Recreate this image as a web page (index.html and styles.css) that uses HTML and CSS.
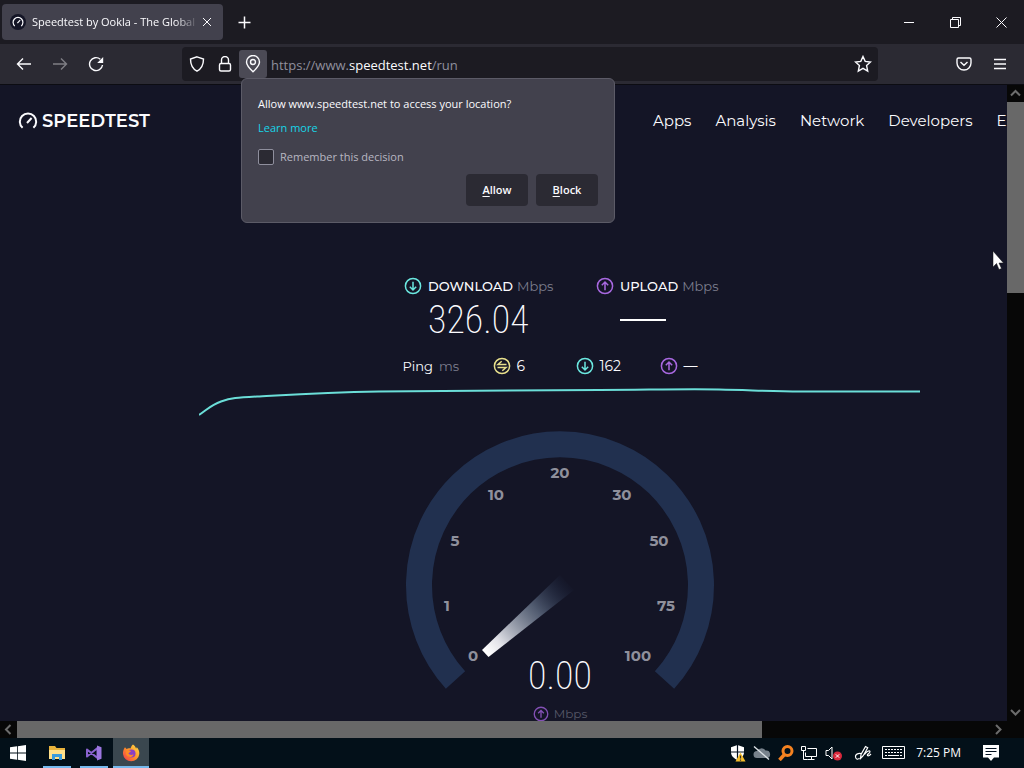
FILE: index.html
```html
<!DOCTYPE html>
<html lang="en">
<head>
<meta charset="utf-8">
<title>Speedtest by Ookla - The Global Broadband Speed Test</title>
<link rel="stylesheet" href="styles.css">
</head>
<body>
<svg class="defs" aria-hidden="true">
  <symbol id="dial" viewBox="0 0 20 20"><path d="M4.600 16.800A8.200 8.200 0 1 1 15.400 16.800M9 12l4.600-5" fill="none" stroke="currentColor" stroke-width="2"/></symbol>
  <symbol id="down" viewBox="0 0 18 18"><circle cx="9" cy="9" r="7.600"/><path d="M9 4.800v8M5.800 9.800 9 13l3.200-3.200"/></symbol>
  <symbol id="up" viewBox="0 0 18 18"><circle cx="9" cy="9" r="7.600"/><path d="M9 13.200v-8M5.800 8.200 9 5l3.200 3.200"/></symbol>
  <symbol id="swap" viewBox="0 0 18 18"><circle cx="9" cy="9" r="7.600"/><path d="M13.500 7.400H5L8.700 4.200M4.500 10.600H13L9.300 13.800"/></symbol>
</svg>
<div class="window">
  <header class="tabbar">
    <div class="tab">
      <span class="favicon"><svg width="12" height="12"><use href="#dial"/></svg></span>
      <span class="tab-title">Speedtest by Ookla - The Global</span>
      <button class="tab-close" aria-label="Close tab"><svg width="10" height="10" viewBox="0 0 10 10"><path d="M1 1l8 8M9 1l-8 8"/></svg></button>
    </div>
    <button class="new-tab" aria-label="New tab"><svg width="13" height="13" viewBox="0 0 13 13"><path d="M6.500 .5v12M.5 6.500h12"/></svg></button>
    <div class="window-controls">
      <button aria-label="Minimize"><svg width="11" height="11" viewBox="0 0 11 11"><path d="M0 5.500h10"/></svg></button>
      <button aria-label="Restore"><svg width="11" height="11" viewBox="0 0 11 11"><path d="M.5 2.500h8v8h-8zM2.500 2.500v-2h8v8h-2"/></svg></button>
      <button aria-label="Close"><svg width="11" height="11" viewBox="0 0 11 11"><path d="M.5.5l10 10M10.500.5l-10 10"/></svg></button>
    </div>
  </header>

  <div class="toolbar">
    <button class="tool" aria-label="Back"><svg width="16" height="16" viewBox="0 0 16 16"><path d="M15 8H1.500M7 2.500 1.500 8 7 13.500"/></svg></button>
    <button class="tool" aria-label="Forward" disabled><svg width="16" height="16" viewBox="0 0 16 16"><path d="M1 8h13.500M9 2.500 14.500 8 9 13.500"/></svg></button>
    <button class="tool" aria-label="Reload"><svg width="16" height="16" viewBox="0 0 16 16"><path d="M14.500 9A6.500 6.500 0 1 1 12.300 3.200"/><path d="M15.200 1v6H9.200z" class="solid"/></svg></button>
    <div class="urlbar">
      <button class="url-icon" aria-label="Tracking protection"><svg width="16" height="16" viewBox="0 0 16 16"><path d="M8 .8 14.500 3c0 6-1.500 9.500-6.500 12.200C3 12.500 1.500 9 1.500 3z"/></svg></button>
      <button class="url-icon" aria-label="Connection secure"><svg width="16" height="16" viewBox="0 0 16 16"><path d="M4.500 7.500V4a3.500 3.500 0 0 1 7 0v3.500"/><rect x="2.500" y="7.500" width="11" height="7.500" rx="1.500"/></svg></button>
      <div class="permission">
        <button class="url-icon active" aria-label="Location permission"><svg width="16" height="18" viewBox="0 0 16 18"><path d="M8 16.800C4.500 13.500 1.500 10.500 1.500 7a6.500 6.500 0 0 1 13 0c0 3.500-3 6.500-6.500 9.800z"/><circle cx="8" cy="7" r="2.500"/></svg></button>
        <section class="popup" role="dialog" aria-label="Location request">
          <h2>Allow www.speedtest.net to access your location?</h2>
          <a href="#learn">Learn more</a>
          <label class="remember" for="remember"><input type="checkbox" id="remember">Remember this decision</label>
          <div class="popup-actions">
            <button><span><u>A</u>llow</span></button>
            <button><span><u>B</u>lock</span></button>
          </div>
        </section>
      </div>
      <div class="address">https://www.<b>speedtest.net</b>/run</div>
      <button class="url-icon" aria-label="Bookmark this page"><svg width="18" height="18" viewBox="0 0 18 18"><path d="M9 1.500l2.200 4.900 5.300.6-3.900 3.600 1.100 5.400L9 13.300 4.300 16l1.100-5.400L1.500 7l5.300-.6z"/></svg></button>
    </div>
    <button class="tool" aria-label="Save to Pocket"><svg width="16" height="16" viewBox="0 0 16 16"><path d="M2.500 2h11a1.500 1.500 0 0 1 1.500 1.500V7A7 7 0 0 1 1 7V3.500A1.500 1.500 0 0 1 2.500 2zM4.500 6 8 9.300 11.500 6"/></svg></button>
    <button class="tool" aria-label="Menu"><svg width="14" height="16" viewBox="0 0 14 16"><path d="M1 3.500h12M1 8h12M1 12.500h12"/></svg></button>
  </div>

  <div class="content">
    <div class="viewport">
      <div class="page">
        <header class="site-header">
          <a class="logo" href="#home"><svg width="20" height="20"><use href="#dial"/></svg>SPEEDTEST</a>
          <nav class="site-nav">
            <a href="#apps">Apps</a>
            <a href="#analysis">Analysis</a>
            <a href="#network">Network</a>
            <a href="#developers">Developers</a>
            <a href="#enterprise">Enterprise</a>
          </nav>
        </header>
        <main>
          <div class="results">
            <section class="result">
              <h3><svg class="ico download"><use href="#down"/></svg>DOWNLOAD <span>Mbps</span></h3>
              <p class="value">326.04</p>
            </section>
            <section class="result">
              <h3><svg class="ico upload"><use href="#up"/></svg>UPLOAD <span>Mbps</span></h3>
              <p class="value"><span class="dash"></span></p>
            </section>
          </div>
          <div class="pings">
            <span class="ping-label">Ping <span>ms</span></span>
            <span><svg class="ico idle"><use href="#swap"/></svg>6</span>
            <span><svg class="ico download"><use href="#down"/></svg>162</span>
            <span><svg class="ico upload"><use href="#up"/></svg>—</span>
          </div>
          <svg class="chart" viewBox="0 0 722 32" aria-label="Download speed over time"><path d="M0 28C9 22 12 18 22 14.500S38 10.500 58 9.500S120 5.500 180 4.500S330 3.500 400 3S490 2 520 2.500S570 4.500 602 4.500H721"/></svg>
          <div class="gauge">
            <svg viewBox="0 0 310 260" aria-label="Speed gauge">
              <defs><linearGradient id="needle" gradientUnits="userSpaceOnUse" x1="82" y1="222" x2="164" y2="150"><stop offset="0" stop-color="#fff"/><stop offset=".15" stop-color="#e2e2e8"/><stop offset=".6" stop-color="#6c7a90" stop-opacity=".7"/><stop offset="1" stop-color="#26395c" stop-opacity="0"/></linearGradient></defs>
              <path class="track" d="M50.500 249A141 141 0 1 1 259.500 249"/>
              <path fill="url(#needle)" d="M77 219 83.500 226 169 159 155 144z"/>
              <g class="ticks">
                <text x="68" y="230">0</text><text x="42" y="180">1</text><text x="50" y="115">5</text>
                <text x="91" y="69">10</text><text x="155" y="47">20</text><text x="217" y="69">30</text>
                <text x="254" y="115">50</text><text x="261" y="180">75</text><text x="233" y="230">100</text>
              </g>
            </svg>
            <div class="reading">
              <p class="value">0.00</p>
              <p class="unit"><svg class="ico upload"><use href="#up"/></svg>Mbps</p>
            </div>
          </div>
        </main>
      </div>
    </div>
    <div class="vscroll">
      <svg width="17" height="17" viewBox="0 0 17 17"><path d="M4 10.500 8.500 6 13 10.500"/></svg>
      <div class="vthumb"></div>
      <svg width="17" height="17" viewBox="0 0 17 17"><path d="M4 6 8.500 10.500 13 6"/></svg>
    </div>
    <div class="hscroll">
      <svg width="17" height="17" viewBox="0 0 17 17"><path d="M10.500 4 6 8.500 10.500 13"/></svg>
      <div class="hthumb"></div>
      <svg width="17" height="17" viewBox="0 0 17 17"><path d="M6 4 10.500 8.500 6 13"/></svg>
    </div>
    <svg class="cursor" width="12" height="20" viewBox="0 0 12 20"><path d="M1 0v16l3.500-3.500L7 18.500l2.500-1L7 12h4.500z" fill="#fff" stroke="#111" stroke-width=".5"/></svg>
  </div>

  <footer class="taskbar">
    <button class="start" aria-label="Start"><svg width="16" height="16" viewBox="0 0 16 16" fill="#fff"><path d="M0 2.300 7 1.300V7.600H0zM7.800 1.200 16 0v7.600H7.800zM0 8.400h7v6.300L0 13.700zM7.800 8.400H16V16l-8.200-1.200z"/></svg></button>
    <button class="app" aria-label="File Explorer"><svg width="18" height="16" viewBox="0 0 18 16"><path d="M1 1h6l1.500 2H17v11H1z" fill="#e9b33c"/><path d="M1 5h16v9H1z" fill="#ffe08a"/><path d="M4 15V9h10v6h-3v-3H7v3z" fill="#3a9bdc"/></svg></button>
    <button class="app" aria-label="Visual Studio"><svg width="18" height="18" viewBox="0 0 18 18"><path d="M2 5.500 12.500 14V4L2 12.500z" fill="none" stroke="#8a63d0" stroke-width="2" stroke-linejoin="round"/><path d="M12 1.500l4.500 1.800v11.400L12 16.500z" fill="#9b76e0"/></svg></button>
    <button class="app current" aria-label="Firefox"><svg width="18" height="18" viewBox="0 0 18 18"><defs><linearGradient id="fox" x1="1" y1="0" x2="0" y2="1"><stop offset="0" stop-color="#ffe44a"/><stop offset=".5" stop-color="#ff9228"/><stop offset="1" stop-color="#f32f52"/></linearGradient></defs><path d="M11 .5c2 1.500 2.600 2.600 3 4 .7-.4.700-1 .6-1.500C16.500 5 17.500 7 17.300 10A8.200 8.200 0 0 1 1 10C.8 7.500 1.500 5 3 3.200L4.500 5C6 4 7.500 4.200 8.500 4.500 9 3 9.700 1.500 11 .5z" fill="url(#fox)"/><circle cx="9.500" cy="9.500" r="4" fill="#8b3fc4"/><path d="M4.500 6c2 0 3 .2 4.500 1.200C8 8.500 6.700 8.500 6.500 9.500c1.500 2 3.500 1.500 5 .7C11 14 5 14 4 10z" fill="#ff8b26"/></svg></button>
    <div class="tray">
      <svg width="16" height="17" viewBox="0 0 16 17"><path d="M7.500 0 14 2.200V7c0 4-3 6.500-6.500 8C4 13.500 1 11 1 7V2.200z" fill="#fff"/><path d="M7.500 0v15M1 7h13" stroke="#02101f" stroke-width="1.200"/><path d="M10.500 7.500 15.500 16.500h-10z" fill="#f6bd2b"/><path d="M10.500 10.500v3M10.500 14.500v1.200" stroke="#333" stroke-width="1.200"/></svg>
      <svg width="18" height="16" viewBox="0 0 18 16"><path d="M4 13a3.500 3.500 0 0 1 0-7 5 5 0 0 1 8.500-.5A3.800 3.800 0 0 1 14 13z" fill="#78828c"/><path d="M1 1.500l15 13" stroke="#dde2e6" stroke-width="1.400"/></svg>
      <svg width="16" height="16" viewBox="0 0 16 16" fill="none" stroke="#f58220"><circle cx="9.500" cy="6" r="4.500" stroke-width="3"/><path d="M6.500 9.500 1.500 15" stroke-width="3.500"/></svg>
      <svg width="17" height="16" viewBox="0 0 17 16" fill="none" stroke="#fff"><path d="M6.500 3.500h9v8h-11V7.500M6.500 14.500h7M10.500 11.500v3M.5 1.500h4v4h-4zM2.500 5.500v9h4"/></svg>
      <svg width="18" height="16" viewBox="0 0 18 16"><path d="M1 5.500h2.500L7 2v12l-3.500-3.500H1z" fill="none" stroke="#fff"/><circle cx="12.500" cy="11" r="4.500" fill="#d9283c"/><path d="M10.800 9.300l3.400 3.400M14.200 9.300l-3.400 3.400" stroke="#fff"/></svg>
      <svg class="pen" width="18" height="16" viewBox="0 0 18 16" fill="none" stroke="#fff" stroke-width="1.200"><path d="M6.500 13.500 7 9.500l4.500-8 2.200 1.200-4.500 8zM10.500 9.500c2-3 5-4.500 5.500-3s-3.500 3-2.500 4 2.500-.5 3.500-1.500M7 8.500c-3-.5-6 1-5.500 3.500S4 15 5.500 13"/></svg>
      <svg class="keyboard" width="23" height="14" viewBox="0 0 23 14" fill="none" stroke="#fff"><path d="M.5.5h22v12H.5z"/><path d="M3 3.500h17M3 6.500h17" stroke-dasharray="2 1"/><path d="M3 9.500h2M6 9.500h11M18 9.500h2"/></svg>
      <time>7:25 PM</time>
      <svg width="16" height="16" viewBox="0 0 16 16"><path d="M0 0h16v12.500h-5L8 16l-3-3.500H0z" fill="#fff"/><path d="M2.500 3.500h11M2.500 6.500h11M2.500 9.500h6" stroke="#02101f"/></svg>
    </div>
  </footer>
</div>
</body>
</html>
```

FILE: styles.css
```css
* { box-sizing: border-box; }
body { margin: 0; font: 11px/16px "Open Sans", "Noto Sans", sans-serif; color: #fbfbfe; background: #141526; }
button { background: none; border: 0; padding: 0; color: inherit; font: inherit; display: flex; align-items: center; justify-content: center; }
a { color: inherit; text-decoration: none; }
h2, h3, p { margin: 0; font-weight: 400; }
.defs { position: absolute; width: 0; height: 0; }
.window { height: 100vh; display: flex; flex-direction: column; overflow: hidden; }

/* Tab strip */
.tabbar { display: flex; align-items: center; height: 44px; background: #1c1b22; padding-left: 2px; flex: none; }
.tabbar svg, .toolbar svg { fill: none; stroke: currentColor; }
.tab { display: flex; align-items: center; width: 221px; height: 36px; padding: 0 8px; background: #42414d; border-radius: 4px; }
.favicon { width: 16px; height: 16px; flex: none; border-radius: 8px; background: #141526; display: flex; align-items: center; justify-content: center; margin-right: 6px; }
.tab-title { flex: 1; overflow: hidden; white-space: nowrap; mask-image: linear-gradient(to left, transparent, #000 24px); }
.tab-close { width: 16px; height: 16px; flex: none; }
.new-tab { width: 43px; height: 36px; }
.new-tab svg { stroke-width: 1.5; }
.window-controls { margin-left: auto; display: flex; align-self: stretch; }
.window-controls button { width: 46px; }

/* Navigation toolbar */
.toolbar { display: flex; align-items: center; height: 41px; padding: 0 6px; background: #2b2a33; border-bottom: 1px solid #0c0c12; flex: none; }
.tool { width: 36px; height: 32px; flex: none; }
.tool:disabled { opacity: .4; }
.toolbar svg { stroke-width: 1.4; }
.toolbar .solid { fill: currentColor; stroke: none; }
.urlbar { flex: 1; display: flex; align-items: center; height: 34px; margin: 0 68px; padding: 0 1px; background: #1c1b22; border-radius: 4px; }
.url-icon { width: 28px; height: 28px; border-radius: 3px; flex: none; }
.active { background: #4b4a55; }
.permission { position: relative; }
.address { flex: 1; padding: 2px 0 0 4px; font-size: 13px; line-height: 20px; color: #8f8f9d; }
.address b { font-weight: 400; color: #fbfbfe; }

/* Location permission popup */
.popup { position: absolute; z-index: 5; top: 28px; left: 2px; width: 374px; padding: 17px 16px 16px; background: #42414d; border: 1px solid #5c5b67; border-radius: 6px; display: flex; flex-direction: column; align-items: flex-start; gap: 8px; }
.popup h2 { font-size: 11px; line-height: 16px; font-weight: 500; white-space: nowrap; }
.popup > a { color: #17d5e8; }
.remember { display: flex; align-items: center; gap: 6px; margin-top: 4px; line-height: 18px; color: #b8b7c2; }
.remember input { appearance: none; width: 16px; height: 16px; margin: 0; border: 1px solid #8f8f9d; border-radius: 2px; background: #2b2a33; }
.popup-actions { display: flex; align-self: flex-end; gap: 8px; }
.popup-actions button { width: 62px; height: 32px; background: #2b2a33; border-radius: 4px; font-weight: 600; }
.popup u { text-underline-offset: 2px; }

/* Page area and scrollbars */
.content { flex: 1; min-height: 0; position: relative; display: grid; grid-template-columns: minmax(0, 1fr) 17px; grid-template-rows: minmax(0, 1fr) 17px; }
.viewport { overflow: hidden; background: #141526; }
.page { min-width: 1120px; font-family: Montserrat, Inter, sans-serif; }
.vscroll { display: flex; flex-direction: column; background: #070707; }
.hscroll { grid-column: 1 / 3; display: flex; background: #070707; padding-right: 17px; }
.vscroll > svg, .hscroll > svg { flex: none; fill: none; stroke: #6c6c6c; stroke-width: 2; }
.vthumb { height: 30%; margin-bottom: auto; background: #686868; }
.hthumb { width: 74%; margin-right: auto; background: #686868; }
.cursor { position: absolute; left: 992px; top: 166px; }

/* Site header */
.site-header { display: flex; align-items: center; justify-content: space-between; height: 72px; padding: 0 46px 0 18px; }
.logo { display: flex; align-items: center; gap: 4px; font-size: 18px; font-weight: 600; }
.site-nav { display: flex; gap: 24px; font-size: 15px; line-height: 20px; }

/* Results */
main { display: flex; flex-direction: column; align-items: center; padding-top: 120px; }
.ico { width: 18px; height: 18px; flex: none; fill: none; stroke: currentColor; stroke-width: 1.5; }
.download { color: #6be8e0; }
.upload { color: #a868e0; }
.idle { color: #e8e08c; }
.results { display: flex; gap: 42px; padding-left: 30px; }
.result { width: 150px; }
.result h3 { display: flex; align-items: center; gap: 6px; height: 18px; font-size: 13px; font-weight: 500; white-space: nowrap; }
.result h3 span, .ping-label span { color: #7d7e8e; font-weight: 400; }
.result h3 span { margin-left: -2px; }
.value { font: 200 38px/52px "Roboto Condensed", Roboto, sans-serif; }
.result .value { display: flex; align-items: center; padding-left: 24px; height: 50px; }
.dash { width: 46px; height: 2px; margin-left: -8px; background: #fff; }
.result:last-child .value { padding-left: 32px; }
.pings { display: grid; grid-template-columns: 90px 83px 84px 58px; width: 315px; margin-top: 12px; font-size: 14px; line-height: 18px; }
.pings > span { display: flex; align-items: center; gap: 6px; }
.ping-label { font-size: 13px; }
.chart { width: 722px; height: 32px; margin-top: 12px; }
.chart path { fill: none; stroke: #6bded8; stroke-width: 2; }
.gauge { display: grid; width: 310px; margin-top: 12px; }
.gauge > * { grid-area: 1 / 1; }
.track { fill: none; stroke: #21304f; stroke-width: 26; }
.ticks { fill: #8f909c; font-size: 15px; font-weight: 700; text-anchor: middle; }
.reading { align-self: start; padding-top: 219px; text-align: center; }
.unit { display: flex; align-items: center; justify-content: center; gap: 5px; margin-top: 4px; font-size: 12px; color: #575969; }
.unit .ico { width: 16px; height: 16px; color: #8350b4; }

/* Taskbar */
.taskbar { display: flex; height: 30px; background: #031019; flex: none; }
.start { width: 36px; margin-right: 3px; }
.app { width: 36px; margin-right: 1px; background: linear-gradient(#76b9ed, #76b9ed) bottom / 28px 2px no-repeat; }
.app.current { background-color: #3a474f; background-size: 100% 2px; }
.tray { margin-left: auto; display: flex; align-items: center; gap: 7px; padding-right: 25px; }
.tray svg { flex: none; }
.pen { margin-left: 4px; }
.keyboard { margin-left: 3px; }
.tray time { font-size: 12px; line-height: 16px; margin: 0 15px 0 4px; }
```
